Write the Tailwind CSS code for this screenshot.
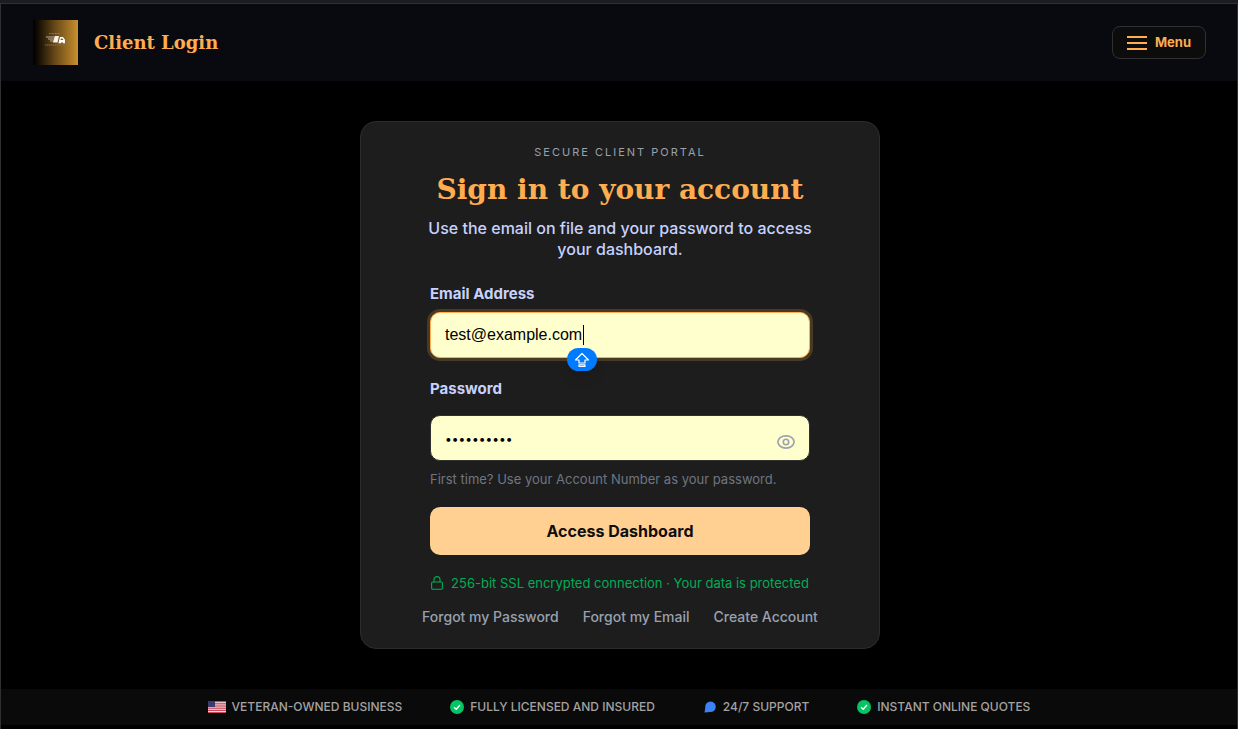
<!DOCTYPE html>
<html lang="en">
<head>
<meta charset="utf-8">
<meta name="viewport" content="width=device-width, initial-scale=1">
<title>Client Login</title>
<script src="https://cdn.jsdelivr.net/npm/@tailwindcss/browser@4"></script>
</head>
<body class="flex min-h-screen flex-col bg-black font-['Inter',sans-serif] text-[#c7d2fe]">
<div class="h-[3px] bg-[#1e1c23]"></div>
<div class="flex grow flex-col border border-b-0 border-[#303034]">
  <header class="flex h-[77px] items-center justify-between bg-[#090a0f] pr-[31px] pl-8">
    <a href="#" class="flex items-center gap-4">
      <svg class="size-[45px]" viewBox="0 0 45 45" role="img" aria-label="Company logo">
        <defs><linearGradient id="gold"><stop offset="0" stop-color="#000"/><stop offset=".1" stop-color="#100b03"/><stop offset=".5" stop-color="#694a19"/><stop offset="1" stop-color="#c9902e"/></linearGradient></defs>
        <rect width="45" height="45" fill="url(#gold)"/>
        <path d="M16 13.500h11" stroke="#a38c62" stroke-width=".8" stroke-dasharray="1 .5"/>
        <path d="M13 17h9M15 19h7M17 21h5" stroke="#b9ac94" stroke-width="1.200"/>
        <path d="M22 16h4l-1.500 6.500H20z" fill="#f6f3ec"/>
        <path fill-rule="evenodd" d="M25.500 22.800 27 17h3l2 2.800v3.500h-2a1 1 0 0 0-2 0h-2.500zM28 18.400l-.4 1.700h2.800l-1-1.700z" fill="#fff"/>
        <path d="M12 25h21" stroke="#8d7242" stroke-width="1" stroke-dasharray="1.500 .5"/>
      </svg>
      <span class="font-['DejaVu_Serif',serif] text-[18px] leading-6 font-bold text-[#ffad4f]">Client Login</span>
    </a>
    <button type="button" class="flex h-[33px] items-center gap-2 rounded-lg border border-[#303030] bg-[#0c0c0c] px-3.5 text-[13px] font-bold text-[#ffad4f]">
      <svg class="h-[14px] w-5" viewBox="0 0 20 14" aria-hidden="true"><path d="M0 1h20M0 7h20M0 13h20" stroke="currentColor" stroke-width="2"/></svg>
      Menu
    </button>
  </header>

  <main class="flex flex-col items-center py-10 pr-4 pl-[18px]">
    <section class="flex w-full max-w-[520px] flex-col items-center rounded-2xl border border-[#2c2c2c] bg-[#1d1d1d] px-4 pt-5 pb-[21px]">
      <p class="text-[11px] leading-5 tracking-[2px] text-[#99a1af] uppercase">Secure Client Portal</p>
      <h1 class="mt-2 text-center font-['DejaVu_Serif',serif] text-[28px] leading-10 font-bold text-[#ffad4f]">Sign in to your account</h1>
      <p class="mt-2 max-w-[400px] text-center text-[16px] leading-[21px] font-medium">Use the email on file and your password to access your dashboard.</p>

      <form class="mt-6 flex w-full max-w-[380px] flex-col">
        <label for="email" class="text-[15px] leading-5 font-bold">Email Address</label>
        <div class="relative mt-2">
          <input id="email" type="email" value="test@example.com" class="block h-[46px] w-full rounded-[10px] border border-[#ffad4f] bg-[#ffffcd] px-3.5 font-['Liberation_Sans',sans-serif] text-[16px] text-black ring-3 ring-[#4a3a24] outline-none">
          <span class="absolute top-[13px] left-[153px] h-5 w-px bg-black"></span>
          <span class="absolute top-9 left-[137px] flex h-[23px] w-[30px] items-center justify-center rounded-full bg-[#007aff] shadow-lg">
            <svg class="size-4" viewBox="0 0 16 16" fill="none" stroke="#fff" stroke-width="1.200" stroke-linejoin="round" aria-hidden="true"><path d="M8 1.500 14.500 8H11v3H5V8H1.500z"/><path d="M5 12.800h6v1.700H5z"/></svg>
          </span>
        </div>

        <label for="password" class="mt-[21px] text-[15px] leading-5 font-bold">Password</label>
        <div class="relative mt-4">
          <input id="password" type="password" value="accountpwd" class="block h-[46px] w-full rounded-[10px] border border-[#303030] bg-[#ffffcd] pr-12 pl-3.5 text-[12px] text-black outline-none">
          <button type="button" aria-label="Show password" class="absolute top-[18px] right-3.5 text-[#9ca3af]">
            <svg class="h-[18px] w-5" viewBox="0 0 20 18" fill="none" stroke="currentColor" stroke-width="1.600" aria-hidden="true"><path d="M1.800 9C2.600 5.200 6 2.900 10 2.900S17.400 5.200 18.200 9C17.400 12.800 14 15.100 10 15.100S2.600 12.800 1.800 9z"/><circle cx="10" cy="9" r="2.700"/></svg>
          </button>
        </div>
        <p class="mt-2 text-[13px] leading-5 text-[#6f7682]">First time? Use your Account Number as your password.</p>
        <button type="submit" class="mt-[18px] h-12 rounded-[10px] bg-[#ffd092] text-[16px] font-bold text-[#0e0e0e]">Access Dashboard</button>
      </form>

      <p class="mt-[18px] flex items-center gap-2 text-[13px] leading-5 text-[#00ad55]">
        <svg class="h-[14px] w-3" viewBox="0 0 12 14" fill="none" stroke="currentColor" stroke-width="1.100" aria-hidden="true"><rect x=".6" y="6" width="10.800" height="7.200" rx="1.300"/><path d="M3 6V3.600a3 3 0 0 1 6 0V6"/></svg>
        256-bit SSL encrypted connection · Your data is protected
      </p>
      <nav class="mt-3.5 flex flex-wrap justify-center gap-x-6 text-[14px] leading-5 font-medium text-[#99a1af]">
        <a href="#">Forgot my Password</a>
        <a href="#">Forgot my Email</a>
        <a href="#">Create Account</a>
      </nav>
    </section>
  </main>

  <footer class="flex min-h-9 flex-wrap items-center justify-center gap-x-12 bg-[#0a0a0a] text-[12px] leading-5 font-medium text-[#a3a3a3] uppercase">
    <span class="flex items-center gap-1.5">
      <svg class="h-3 w-[18px]" viewBox="0 0 18 12" aria-hidden="true"><path fill="#f0dfe1" d="M0 0h18v12H0z"/><path d="M0 .5h18M0 2.300h18M0 4.100h18M0 5.900h18M0 7.700h18M0 9.500h18M0 11.500h18" stroke="#c8475a"/><path fill="#3c3b6e" d="M0 0h7v6H0z"/></svg>
      Veteran-Owned Business
    </span>
    <span class="flex items-center gap-1.5">
      <svg class="size-3.5" viewBox="0 0 14 14" aria-hidden="true"><circle cx="7" cy="7" r="7" fill="#05c463"/><path d="m4 7.200 2.200 2.100L10 5" fill="none" stroke="#fff" stroke-width="1.300"/></svg>
      Fully Licensed and Insured
    </span>
    <span class="flex items-center gap-1.5">
      <svg class="size-3.5" viewBox="0 0 14 14" aria-hidden="true"><circle cx="7.500" cy="6.800" r="5.300" fill="#3b82f6"/><path d="M2.300 7.500 1.500 12.500 7 12z" fill="#3b82f6"/></svg>
      24/7 Support
    </span>
    <span class="flex items-center gap-1.5">
      <svg class="size-3.5" viewBox="0 0 14 14" aria-hidden="true"><circle cx="7" cy="7" r="7" fill="#05c463"/><path d="m4 7.200 2.200 2.100L10 5" fill="none" stroke="#fff" stroke-width="1.300"/></svg>
      Instant Online Quotes
    </span>
  </footer>
</div>
</body>
</html>
